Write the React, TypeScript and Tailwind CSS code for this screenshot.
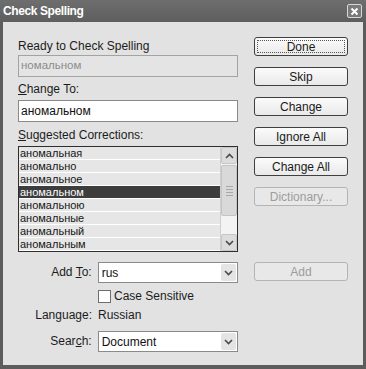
import React from 'react';

const suggestions = [
  'аномальная',
  'аномально',
  'аномальное',
  'аномальном',
  'аномальною',
  'аномальные',
  'аномальный',
  'аномальным',
];

const Chevron: React.FC<{ up?: boolean }> = ({ up }) => (
  <svg width="9" height="6" viewBox="0 0 9 6" className="block">
    <path
      d={up ? 'M1 5 L4.5 1.5 L8 5' : 'M1 1 L4.5 4.5 L8 1'}
      fill="none"
      stroke="#4a4a4a"
      strokeWidth="1.6"
    />
  </svg>
);

const Button: React.FC<{ label: string; disabled?: boolean; focused?: boolean; className?: string }> = ({
  label,
  disabled,
  focused,
  className = '',
}) => (
  <div
    className={`h-[19px] w-[94px] rounded-[3px] border flex items-center justify-center text-[12px] leading-none ${
      disabled
        ? 'border-[#b4b4b4] bg-[#e8e8e8] text-[#9c9c9c]'
        : 'border-[#3f3f3f] bg-gradient-to-b from-[#fbfbfb] to-[#e9e9e9] text-[#1a1a1a]'
    } ${className}`}
  >
    {focused ? (
      <div className="w-[88px] h-[13px] border border-dotted border-[#555] flex items-center justify-center">
        {label}
      </div>
    ) : (
      label
    )}
  </div>
);

const Select: React.FC<{ value: string }> = ({ value }) => (
  <div className="w-[141px] h-[21px] bg-white border border-[#8a8a8a] flex items-center justify-between pl-[3px] pr-[1px] text-[12px] text-[#111]">
    <span>{value}</span>
    <div className="w-[15px] h-[17px] bg-[#e4e4e4] rounded-[2px] flex items-center justify-center">
      <Chevron />
    </div>
  </div>
);

const App: React.FC = () => {
  return (
    <div className="w-[366px] h-[369px] bg-[#5c5c5c] flex flex-col font-['Liberation_Sans',Arial,sans-serif] select-none">
      {/* Title bar */}
      <div className="h-[22px] flex items-center justify-between pl-[3px] pr-[4px] bg-gradient-to-b from-[#6e6e6e] to-[#5e5e5e]">
        <span className="text-white font-bold text-[12px] tracking-[-0.4px] leading-none">Check Spelling</span>
        <div className="w-[15px] h-[14px] border border-[#d8d8d8] rounded-[2px] bg-[#7a7a7a] flex items-center justify-center">
          <svg width="9" height="9" viewBox="0 0 9 9">
            <path d="M1.5 1.5 L7.5 7.5 M7.5 1.5 L1.5 7.5" stroke="white" strokeWidth="2" />
          </svg>
        </div>
      </div>

      {/* Body */}
      <div className="mx-[3px] h-[343px] bg-[#e2e2e2] pl-[15px] text-[#1c1c1c]">
        <div className="flex gap-[16px]">
          {/* Left column */}
          <div className="w-[220px] pt-[17px] flex flex-col">
            <div className="h-[15px] text-[12px] leading-[15px]">Ready to Check Spelling</div>
            <div className="mt-[1px] h-[22px] border border-[#a3a3a3] bg-[#e4e4e4] flex items-center pl-[2px] text-[11.5px] text-[#8c8c8c]">
              номальном
            </div>
            <div className="mt-[5px] h-[15px] text-[12px] leading-[15px]">
              <span className="underline">C</span>hange To:
            </div>
            <div className="mt-[3px] h-[22px] border border-[#8a8a8a] bg-white flex items-center pl-[2px] text-[12px] text-[#111]">
              аномальном
            </div>
            <div className="mt-[6px] h-[15px] text-[12px] leading-[15px]">
              <span className="underline">S</span>uggested Corrections:
            </div>
            <div className="mt-[3px] h-[106px] border border-[#2e2e2e] flex">
              <div className="flex-1 flex flex-col overflow-hidden">
                {suggestions.map((s, i) => (
                  <div
                    key={s}
                    className={`h-[13px] shrink-0 border-b border-white text-[11px] leading-[12px] pl-[1px] ${
                      i === 3 ? 'bg-[#3d3d3d] text-white' : 'bg-[#e6e6e6] text-[#161616]'
                    }`}
                  >
                    {s}
                  </div>
                ))}
              </div>
              {/* Scrollbar */}
              <div className="w-[17px] bg-[#f3f3f3] flex flex-col border-l border-[#cfcfcf]">
                <div className="h-[17px] bg-[#dcdcdc] rounded-[2px] border border-[#c6c6c6] flex items-center justify-center">
                  <Chevron up />
                </div>
                <div className="h-[51px] mt-[1px] bg-[#d9d9d9] rounded-[2px] border border-[#c4c4c4] flex flex-col items-center justify-center gap-[2px]">
                  <div className="w-[7px] h-px bg-[#a8a8a8]" />
                  <div className="w-[7px] h-px bg-[#a8a8a8]" />
                  <div className="w-[7px] h-px bg-[#a8a8a8]" />
                  <div className="w-[7px] h-px bg-[#a8a8a8]" />
                </div>
                <div className="flex-1" />
                <div className="h-[17px] bg-[#dcdcdc] rounded-[2px] border border-[#c6c6c6] flex items-center justify-center">
                  <Chevron />
                </div>
              </div>
            </div>
          </div>

          {/* Right column */}
          <div className="pt-[15px] flex flex-col gap-[11px]">
            <Button label="Done" focused />
            <Button label="Skip" />
            <Button label="Change" />
            <Button label="Ignore All" />
            <Button label="Change All" />
            <Button label="Dictionary..." disabled />
          </div>
        </div>

        {/* Lower options */}
        <div className="mt-[10px] flex gap-[16px]">
          <div className="w-[220px] flex flex-col">
            <div className="flex items-center h-[21px]">
              <div className="w-[80px] pr-[6px] text-right text-[12px] leading-[15px]">
                Add <span className="underline">T</span>o:
              </div>
              <Select value="rus" />
            </div>
            <div className="mt-[7px] flex items-center h-[13px]">
              <div className="w-[80px]" />
              <div className="w-[13px] h-[13px] bg-white border border-[#6e6e6e]" />
              <span className="ml-[3px] text-[12px] leading-[15px]">Case Sensitive</span>
            </div>
            <div className="mt-[5px] flex items-center h-[15px]">
              <div className="w-[80px] pr-[6px] text-right text-[12px] leading-[15px]">Language:</div>
              <span className="text-[12px] leading-[15px]">Russian</span>
            </div>
            <div className="mt-[8px] flex items-center h-[21px]">
              <div className="w-[80px] pr-[6px] text-right text-[12px] leading-[15px]">
                Sear<span className="underline">c</span>h:
              </div>
              <Select value="Document" />
            </div>
          </div>
          <div>
            <Button label="Add" disabled />
          </div>
        </div>
      </div>
    </div>
  );
};

export default App;
